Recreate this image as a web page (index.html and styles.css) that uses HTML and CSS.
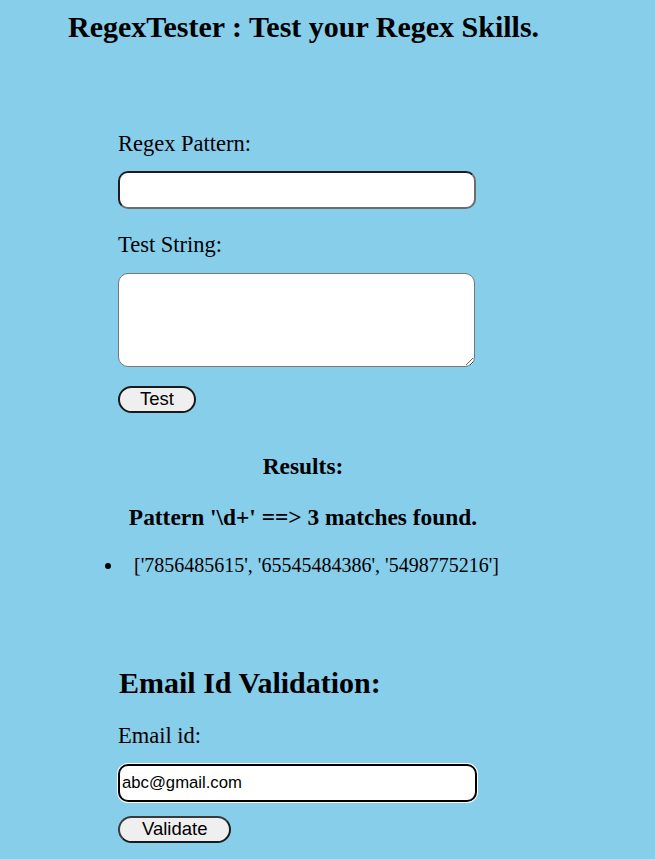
FILE: index.html
```html
<!DOCTYPE html>
<html>
<head>
<meta charset="utf-8">
<title>RegexTester</title>
<link rel="stylesheet" href="styles.css">
</head>
<body>
<h1 class="title">RegexTester : Test your Regex Skills.</h1>
<div class="panel">
  <form class="form">
    <label class="label label-first" for="pattern">Regex Pattern:</label>
    <input class="field field-pattern" id="pattern" type="text">
    <label class="label label-second" for="teststr">Test String:</label>
    <textarea class="area" id="teststr"></textarea>
    <button class="btn btn-test" type="button">Test</button>
  </form>
  <div class="results">
    <h3 class="results-title">Results:</h3>
    <h3 class="results-summary">Pattern '\d+' ==&gt; 3 matches found.</h3>
    <ul class="matches">
      <li class="match">['7856485615', '65545484386', '5498775216']</li>
    </ul>
  </div>
  <form class="form email-form">
    <h2 class="email-title">Email Id Validation:</h2>
    <label class="label label-email" for="email">Email id:</label>
    <input class="field field-email" id="email" type="text" value="abc@gmail.com">
    <button class="btn btn-validate" type="button">Validate</button>
  </form>
</div>
</body>
</html>
```
FILE: styles.css
```css
html, body {
  background: #87ceeb;
}
body {
  margin: 0;
  padding: 0 8px;
  font-family: "Liberation Serif", "Times New Roman", serif;
  color: #000;
  line-height: normal;
}
.title {
  margin: 10px 0 0 60px;
  font-size: 30px;
  font-weight: bold;
}
.panel {
  margin-left: 110px;
  width: 370px;
  padding-top: 1px;
}
.form {
  display: flex;
  flex-direction: column;
  align-items: flex-start;
  margin: 0;
}
.label {
  display: block;
  font-size: 22.5px;
}
.label-first { margin-top: 86px; }
.label-second { margin-top: 23px; }
.label-email { margin-top: 23px; }
.field {
  box-sizing: border-box;
  width: 358px;
  height: 38px;
  border-radius: 10px;
  background: #fff;
  margin: 14px 0 0 0;
  padding: 0 2px;
  font-family: "Liberation Sans", Arial, sans-serif;
  font-size: 16.7px;
  color: #000;
  outline: none;
}
.field-pattern {
  border: 2px solid;
  border-color: #1e1e1e #6c6c6c #6c6c6c #1e1e1e;
}
.field-email {
  width: 359px;
  margin-top: 15px;
  border: 2px solid #000;
  box-shadow: 0 0 0 1px #fff;
}
.area {
  display: block;
  box-sizing: border-box;
  width: 357px;
  height: 94px;
  margin: 15px 0 0 0;
  border: 1px solid #767676;
  border-radius: 10px;
  background: #fff;
  outline: none;
}
.btn {
  box-sizing: border-box;
  height: 27px;
  padding: 0 20px;
  border: 2px solid #1a1a1a;
  border-radius: 14px;
  background: #efefef;
  font-family: "Liberation Sans", Arial, sans-serif;
  font-size: 18.5px;
  color: #000;
  line-height: 1;
}
.btn-test { margin-top: 19px; }
.btn-validate {
  margin-top: 14px;
  padding: 0 22px;
  border-color: #3a3a3a #1a1a1a #1a1a1a #3a3a3a;
}
.results {
  text-align: center;
}
.results-title {
  margin: 40px 0 0 0;
  font-size: 23.4px;
  font-weight: bold;
}
.results-summary {
  margin: 24px 0 0 0;
  font-size: 23.4px;
  font-weight: bold;
}
.matches {
  margin: 23px 0 0 0;
  padding-left: 6px;
  text-align: left;
  font-size: 20px;
}
.match {
  padding-left: 10px;
  white-space: nowrap;
}
.email-title {
  margin: 89px 0 0 1px;
  font-size: 30px;
  font-weight: bold;
}
```
